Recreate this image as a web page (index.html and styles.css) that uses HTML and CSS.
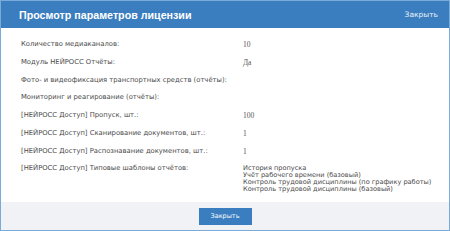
FILE: index.html
```html
<!DOCTYPE html>
<html lang="ru">
<head>
  <meta charset="UTF-8" />
  <title>Просмотр параметров лицензии</title>
  <link rel="stylesheet" href="styles.css">
</head>
<body>

  <div class="dialog">
    <header>
      <h1>Просмотр параметров лицензии</h1>
      <a class="close-link" href="#">Закрыть</a>
    </header>

    <main class="params">
      <div class="label">Количество медиаканалов:</div>
      <div class="value num">10</div>

      <div class="label">Модуль НЕЙРОСС Отчёты:</div>
      <div class="value num">Да</div>

      <div class="label">Фото- и видеофиксация транспортных средств (отчёты):</div>
      <div class="value"></div>

      <div class="label">Мониторинг и реагирование (отчёты):</div>
      <div class="value"></div>

      <div class="label">[НЕЙРОСС Доступ] Пропуск, шт.:</div>
      <div class="value num">100</div>

      <div class="label">[НЕЙРОСС Доступ] Сканирование документов, шт.:</div>
      <div class="value num">1</div>

      <div class="label">[НЕЙРОСС Доступ] Распознавание документов, шт.:</div>
      <div class="value num">1</div>

      <div class="label">[НЕЙРОСС Доступ] Типовые шаблоны отчётов:</div>
      <div class="value list">
        История пропуска<br>
        Учёт рабочего времени (базовый)<br>
        Контроль трудовой дисциплины (по графику работы)<br>
        Контроль трудовой дисциплины (базовый)
      </div>
    </main>

    <footer>
      <button class="close-btn">Закрыть</button>
    </footer>
  </div>

</body>
</html>
```

FILE: styles.css
```css
body {
  margin: 0;
  padding: 0;
  background: #fff;
  font-family: 'DejaVu Sans', Verdana, sans-serif;
}

.dialog {
  width: 450px;
  height: 231px;
  box-sizing: border-box;
  border: 1px solid #7aaad8;
  display: flex;
  flex-direction: column;
  background: white;
}

header {
  background-color: #3a7ebf;
  color: white;
  height: 27px;
  padding: 0 11px 0 18px;
  display: flex;
  justify-content: space-between;
  align-items: center;
}

header h1 {
  margin: 0;
  font-family: 'Liberation Sans', Arial, sans-serif;
  font-size: 10.7px;
  font-weight: bold;
}

.close-link {
  color: #e8f0f8;
  text-decoration: none;
  font-size: 7.5px;
}

.params {
  flex: 1;
  padding: 13px 0 0 20px;
  display: grid;
  grid-template-columns: 222px auto;
  row-gap: 10.75px;
  align-content: start;
  font-size: 6.8px;
  line-height: 7px;
  color: #4a4a4a;
}

.value.num {
  font-family: 'Liberation Serif', 'Times New Roman', serif;
  font-size: 7.5px;
  color: #555;
}

.value.list {
  font-size: 6.6px;
}

footer {
  background-color: #f0f2f6;
  height: 28px;
  display: flex;
  justify-content: center;
  align-items: center;
}

.close-btn {
  background-color: #3a7ebf;
  border: none;
  color: white;
  width: 53px;
  height: 17px;
  padding: 0;
  font-family: 'DejaVu Sans', Verdana, sans-serif;
  font-size: 6.5px;
  cursor: pointer;
}

.close-btn:hover {
  background-color: #2d6aa5;
}
```
